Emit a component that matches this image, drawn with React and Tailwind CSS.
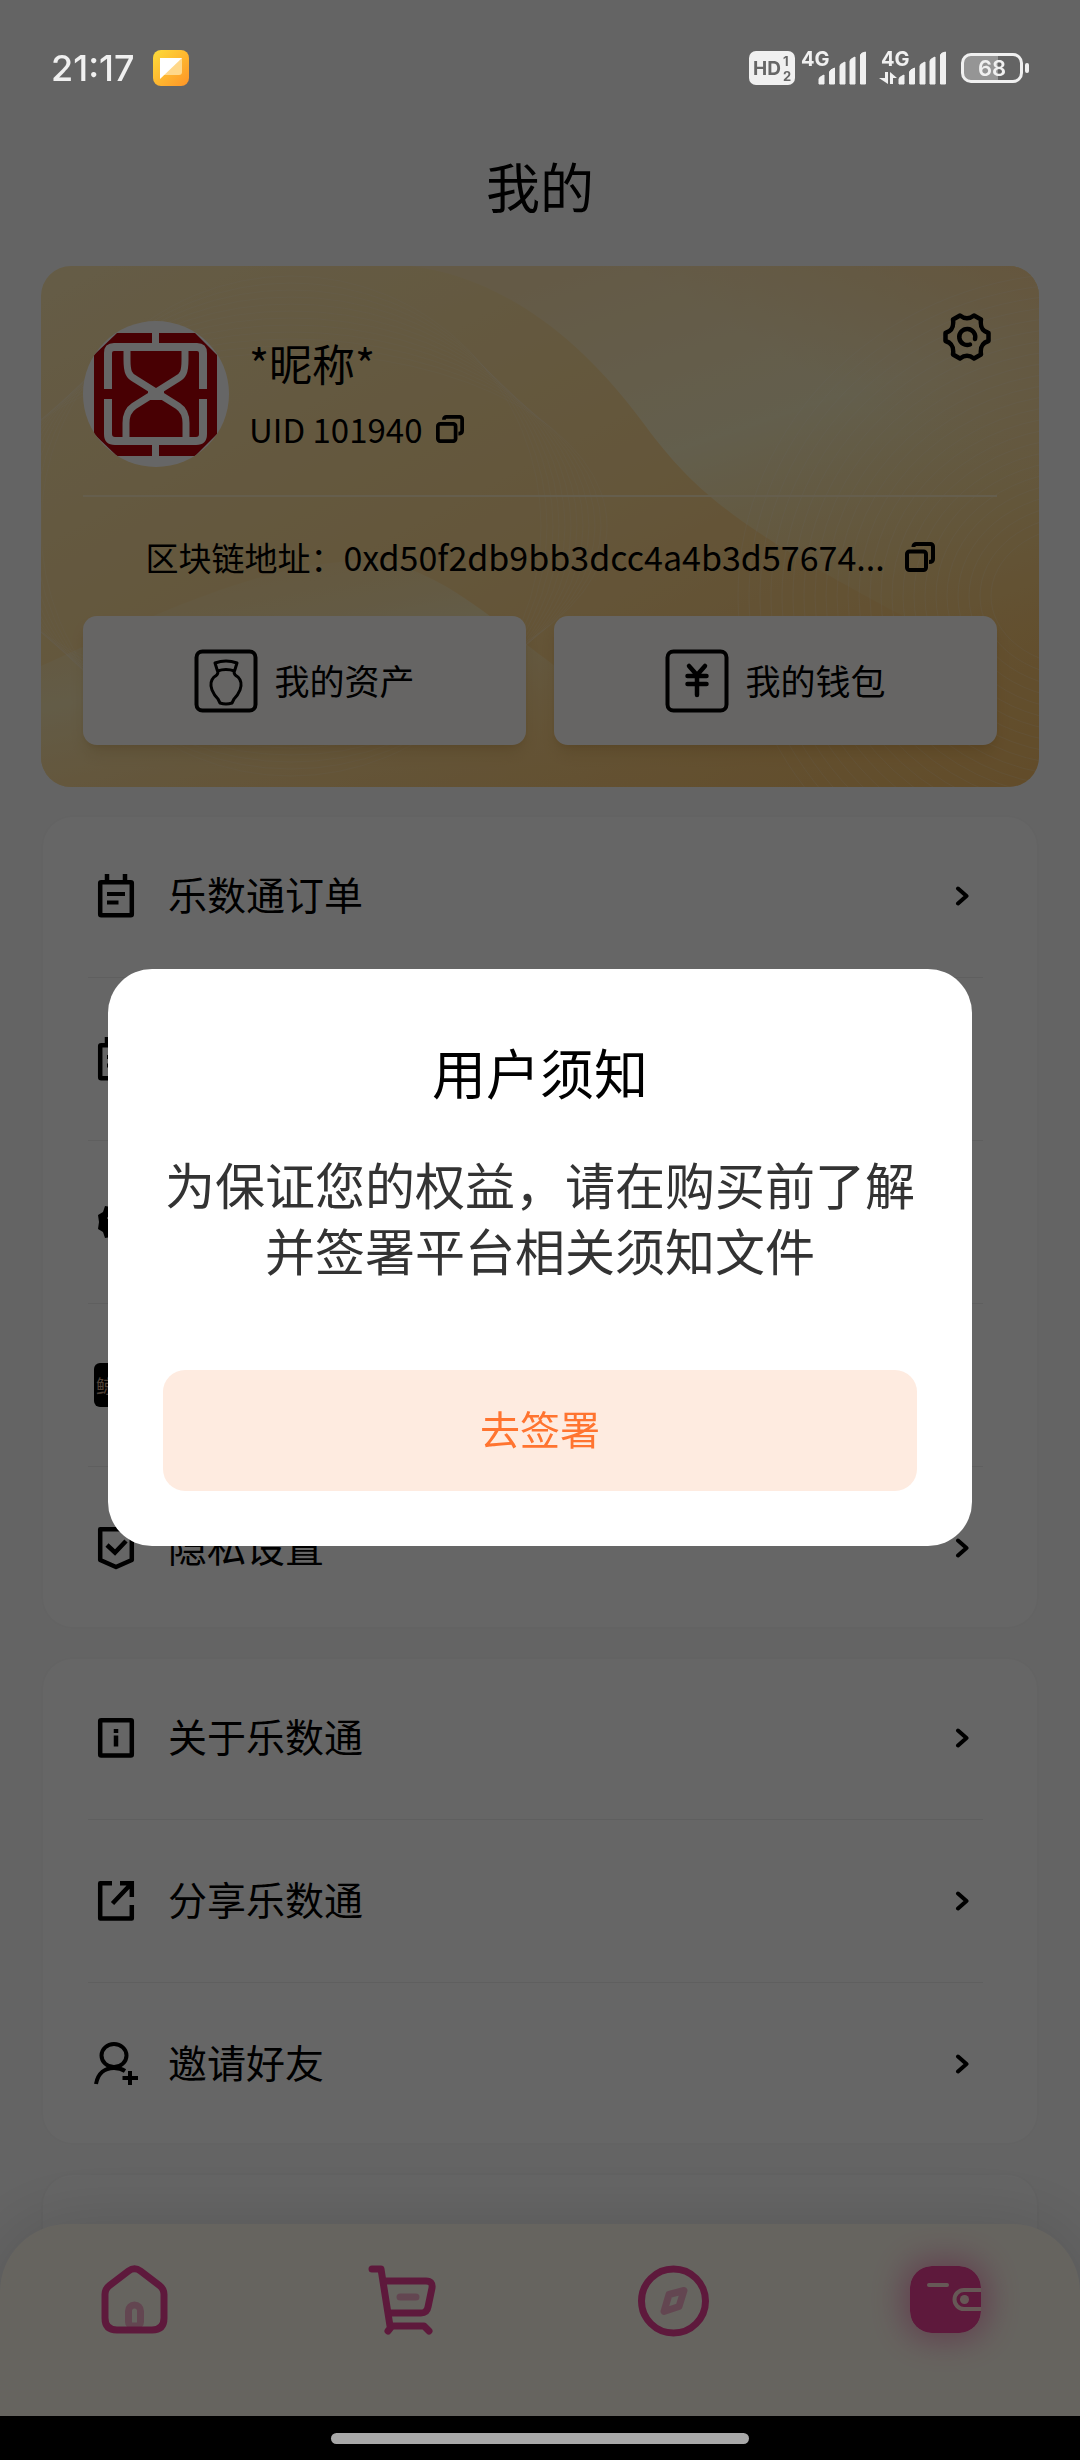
import React from 'react';

const Chevron = () => (
  <svg className="w-3.5 h-5" viewBox="0 0 14 20" fill="none" stroke="currentColor" strokeWidth="4" strokeLinejoin="round" strokeLinecap="round">
    <path d="m3 2.500 8.500 7.500L3 17.500" />
  </svg>
);

const CopyIcon = ({ className }) => (
  <svg className={className} viewBox="0 0 30 30" fill="none" stroke="currentColor" strokeWidth="4">
    <rect x="2" y="9.500" width="19" height="18.500" rx="2.500" />
    <path d="M8.500 5V4.500A2.500 2.500 0 0 1 11 2H25.500A2.500 2.500 0 0 1 28 4.500V17q0 3-4 3" />
  </svg>
);

const GearIcon = () => (
  <svg className="w-12 h-12" viewBox="0 0 48 48" fill="none" stroke="currentColor" strokeWidth="4.500" strokeLinejoin="round" strokeLinecap="round">
    <path d="M17 2.500Q24 8 31 2.500L38 6.500C37 14 39 18 45.500 20V28C39 30 37 34 38 41.500L31 45.500Q24 40 17 45.500L10 41.500C11 34 9 30 2.500 28V20C9 18 11 14 10 6.500Z" />
    <path d="M32 26a8 8 0 1 0-5 5.500" />
  </svg>
);

const OrderIcon = () => (
  <svg className="w-11 h-11" viewBox="0 0 44 44" fill="none" stroke="currentColor" strokeWidth="4.500">
    <rect x="6.200" y="8.200" width="31.600" height="33" rx="1" />
    <path d="M13 0v8M31 0v8" />
    <path d="M13 20h18M13 28.500h11.500" strokeWidth="4" />
  </svg>
);

const BadgeIcon = () => (
  <svg className="w-11 h-11" viewBox="0 0 44 44">
    <path fill="currentColor" d="m22 4 5 3 6-1 2 6 5 3-1 7 1 7-5 3-2 6-6-1-5 3-5-3-6 1-2-6-5-3 1-7-1-7 5-3 2-6 6 1z" />
    <path fill="none" stroke="#fff" strokeWidth="3" d="m14 17 8 9 8-9" />
  </svg>
);

const FishIcon = () => (
  <span className="flex h-11 w-11 items-center overflow-hidden rounded-md bg-black pl-0.5 text-lg text-[#c9a58a]">
    鲸
  </span>
);

const ShieldIcon = () => (
  <svg className="w-11 h-11" viewBox="0 0 44 44" fill="none" stroke="currentColor" strokeWidth="4.500">
    <path d="M6.200 3.200h31.600V34L22 41 6.200 34z" strokeLinejoin="round" />
    <path d="m13 19 8 7.500L32 15" />
  </svg>
);

const InfoIcon = () => (
  <svg className="w-11 h-11" viewBox="0 0 44 44" fill="none" stroke="currentColor" strokeWidth="4.500">
    <rect x="6.200" y="4.200" width="31.600" height="35.200" rx="1" />
    <path d="M22 13v4M22 19.500v11" />
  </svg>
);

const ShareIcon = () => (
  <svg className="w-11 h-11" viewBox="0 0 44 44" fill="none" stroke="currentColor" strokeWidth="4.500">
    <path d="M18 4.200H6.200v35.200h31.600V26" strokeLinejoin="round" />
    <path d="M26 4.200h11.800V18M37 5 18.500 24.500" />
  </svg>
);

const InviteIcon = () => (
  <svg className="w-11 h-11" viewBox="0 0 44 44" fill="none" stroke="currentColor" strokeWidth="4">
    <ellipse cx="20" cy="13.500" rx="12.500" ry="11.500" />
    <path d="M2 42c2-11 9-16 18-16 5 0 8 1 11 3" />
    <path d="M36 29v14M28.500 36h15.500" />
  </svg>
);

const mainRows = [
  { Icon: OrderIcon, label: '乐数通订单' },
  { Icon: OrderIcon },
  { Icon: BadgeIcon },
  { Icon: FishIcon },
  { Icon: ShieldIcon, label: '隐私设置' },
];

const moreRows = [
  { Icon: InfoIcon, label: '关于乐数通' },
  { Icon: ShareIcon, label: '分享乐数通' },
  { Icon: InviteIcon, label: '邀请好友' },
];

const MenuCard = ({ rows }) => (
  <ul className="rounded-[32px] bg-white pl-[47px] pr-14 ring-2 ring-inset ring-[#f7f7f7] divide-y divide-[#eeeeee]">
    {rows.map(({ Icon, label }, i) => (
      <li key={i}>
        <a href="#" className="flex h-[162px] items-center pl-1.5 pr-3.5">
          <Icon />
          <span className="ml-[30px] flex-1 pb-1.5 text-[39px] leading-[56px]">{label}</span>
          <Chevron />
        </a>
      </li>
    ))}
  </ul>
);

const CardBackground = () => (
  <svg className="absolute inset-0 h-full w-full" viewBox="0 0 998 521" preserveAspectRatio="none" fill="none">
    <defs>
      <linearGradient id="base" x1="0" y1="0" x2="1" y2="1">
        <stop offset="0" stopColor="#fce6b0" />
        <stop offset="0.5" stopColor="#fad792" />
        <stop offset="1" stopColor="#f5be68" />
      </linearGradient>
      <linearGradient id="light" x1="0.3" y1="0" x2="0.8" y2="1">
        <stop offset="0" stopColor="#fbe2b0" />
        <stop offset="0.4" stopColor="#f8edc0" />
        <stop offset="1" stopColor="#f8d88e" stopOpacity="0" />
      </linearGradient>
      <linearGradient id="low" x1="0" y1="0" x2="0.8" y2="1">
        <stop offset="0" stopColor="#f8e0a8" stopOpacity="0" />
        <stop offset="0.4" stopColor="#f8e6b2" />
        <stop offset="1" stopColor="#f9c778" stopOpacity="0" />
      </linearGradient>
      <linearGradient id="glow" x1="1" y1="0" x2="0.6" y2="0.5">
        <stop offset="0" stopColor="#fcd79a" />
        <stop offset="1" stopColor="#fcd79a" stopOpacity="0" />
      </linearGradient>
    </defs>
    <path fill="url(#base)" d="M0 0h998v521H0z" />
    <path fill="url(#light)" d="M370 0C450 10 530 60 600 154 660 235 700 270 998 420V0z" />
    <path fill="url(#low)" d="M0 521V400c130-60 240-110 340-105 100 20 160 120 260 150s200 50 240 76z" />
    <path fill="url(#glow)" d="M600 0h398v300H600z" />
    <g stroke="#fff" strokeOpacity="0.16">
      {Array.from({ length: 24 }, (_, i) => (
        <ellipse key={i} cx="1040" cy="330" rx={90 + i * 11} ry={70 + i * 11} />
      ))}
    </g>
    <g stroke="#fff" strokeOpacity="0.12">
      {Array.from({ length: 12 }, (_, i) => (
        <ellipse key={i} cx="250" cy="260" rx={250 + i * 6} ry={250 - i * 7} />
      ))}
    </g>
  </svg>
);

const Avatar = () => (
  <svg className="h-[146px] w-[146px] rounded-full bg-white" viewBox="0 0 146 146" fill="none">
    <path fill="#b40008" d="M34 12h78l22 22v79l-22 22H34l-23-22V34z" />
    <g stroke="#fff" strokeWidth="8" strokeLinejoin="round">
      <path d="M25 68V32q0-6 6-6h83q6 0 6 6v36M25 78v35q0 7 7 7h81q7 0 7-7V78" />
      <path d="M72.500 10v15M72.500 121v15" strokeWidth="7" />
      <path d="M44 27v12c0 12 2 16 8 19l43 27c6 4 8 9 8 17v18" strokeWidth="7" />
      <path d="M102 27v12c0 12-2 16-8 19L51 85c-6 4-8 9-8 17v18" strokeWidth="7" />
    </g>
    <path d="M65 67h16v12H65z" fill="#fff" />
  </svg>
);

const VaseIcon = () => (
  <svg className="h-16 w-16" viewBox="0 0 64 64" fill="none" stroke="currentColor" strokeWidth="4" strokeLinejoin="round">
    <rect x="2.500" y="2.500" width="59" height="59" rx="6" />
    <path strokeWidth="3" d="M21 14q11-4 22 0l-2.500 8q-8.500-3-17 0zM24 23q0 3-4 5-5 5-2 13 2 5 6 9l2 4q6 2 12 0l2-4q4-4 6-9 3-8-2-13-4-2-4-5" />
  </svg>
);

const YuanIcon = () => (
  <svg className="h-16 w-16" viewBox="0 0 64 64" fill="none" stroke="currentColor" strokeWidth="4" strokeLinecap="round">
    <rect x="2.500" y="2.500" width="59" height="59" rx="6" />
    <path d="m24 17 8 9 8-9M22.500 27h19M22.500 35h19M32 27v19" strokeWidth="4.500" />
  </svg>
);

const ProfileCard = () => (
  <section className="relative overflow-hidden rounded-[30px] px-[42px] pb-[42px] pt-[55px]">
    <CardBackground />
    <div className="relative">
      <div className="flex border-b-2 border-[#fdebc0] pb-7">
        <Avatar />
        <div className="ml-5 flex-1 pt-2">
          <p className="text-[43px] leading-[66px]">*昵称*</p>
          <div className="flex items-center gap-3.5 pt-2.5">
            <p className="text-[33px] leading-[48px]">UID 101940</p>
            <button aria-label="复制" className="block"><CopyIcon className="h-7 w-7" /></button>
          </div>
        </div>
        <button aria-label="设置" className="-mt-2 mr-1.5 h-12"><GearIcon /></button>
      </div>
      <div className="flex items-center justify-center pt-9 pb-[35px] text-[33px] leading-[48px]">
        <span>区块链地址：</span>
        <span className="text-[34px] whitespace-nowrap">0xd50f2db9bb3dcc4a4b3d57674...</span>
        <button aria-label="复制" className="ml-5"><CopyIcon className="h-[30px] w-[30px]" /></button>
      </div>
      <div className="grid grid-cols-2 gap-7">
        <button className="flex h-[129px] items-center justify-center gap-4 rounded-[14px] bg-[#fffdfa] text-[35px] shadow-lg shadow-[#a07020]/20">
          <VaseIcon />
          我的资产
        </button>
        <button className="flex h-[129px] items-center justify-center gap-4 rounded-[14px] bg-[#fffdfa] text-[35px] shadow-lg shadow-[#a07020]/20">
          <YuanIcon />
          我的钱包
        </button>
      </div>
    </div>
  </section>
);

const TabBar = () => (
  <nav className="fixed inset-x-0 bottom-0 h-[236px] rounded-t-[68px] bg-[#fffaee] pt-8 shadow-[0_0_80px_rgba(0,0,0,0.16)]">
    <div className="grid grid-cols-4 justify-items-center text-[#eb4096]">
      <a href="#" aria-label="首页">
        <svg className="h-[88px] w-[88px]" viewBox="0 0 88 88" fill="none" stroke="currentColor" strokeWidth="7">
          <path strokeOpacity="0.4" d="M37.500 66V55a6 6 0 0 1 12 0v11a4 4 0 0 1-4 4h-4a4 4 0 0 1-4-4z" />
          <path d="M37.500 15q6-4.500 12 0l19 14.500q4.500 3.500 4.500 9V62q0 12-12 12H26q-12 0-12-12V38.500q0-5.500 4.500-9z" />
        </svg>
      </a>
      <a href="#" aria-label="购物车">
        <svg className="h-[88px] w-[88px]" viewBox="0 0 88 88" fill="none" stroke="currentColor" strokeWidth="7" strokeLinecap="round" strokeLinejoin="round">
          <path d="M11 13h9l9 57M23 25h42q7 0 6 7l-4 19q-1 6-7 6H28M30 70h33l5 5M31 70l-4 5" />
          <path strokeOpacity="0.4" d="M39 41h16" />
        </svg>
      </a>
      <a href="#" aria-label="发现">
        <svg className="h-[88px] w-[88px]" viewBox="0 0 88 88" fill="none" stroke="currentColor" strokeWidth="7" strokeLinejoin="round">
          <circle cx="42.500" cy="45" r="32" />
          <path strokeOpacity="0.4" d="m38 38.500 15-4-5 16-15 5z" />
        </svg>
      </a>
      <a href="#" aria-label="我的" className="pt-2.5">
        <svg className="h-[67px] w-[71px] rounded-[22px] shadow-[0_0_32px_6px_rgba(235,64,150,0.5)]" viewBox="0 0 71 67" fill="none">
          <rect width="71" height="67" rx="21" fill="currentColor" />
          <path d="M19 19h18M71 24H54a9 9 0 0 0 0 19h17" stroke="#ffddd8" strokeWidth="4" strokeLinecap="round" />
          <circle cx="54.500" cy="33.500" r="4.500" fill="#ffddd8" />
        </svg>
      </a>
    </div>
  </nav>
);

const Signal = ({ data }) => (
  <svg className="h-[34px] w-[66px] overflow-visible" viewBox="0 0 66 34" fill="currentColor">
    <text x="0" y="15" fontSize="20" fontWeight="700">4G</text>
    <path d="M18 33v-5q0-2 5-4v9zM28.500 33V21q0-2 5-4v16zM39 33V15q0-2 5-4v22zM49 33V10q0-2 5-4v27zM59.500 33V4q0-2 5-3v32z" stroke="currentColor" strokeWidth="1" strokeLinejoin="round" />
    {data && <path d="M4 21h3v12L-2 27h6zM9 33h3v-6h4L9 21z" />}
  </svg>
);

const StatusBar = () => (
  <header className="flex h-[98px] items-center justify-between px-[51px] pt-[38px] font-[Inter,sans-serif] text-[#f0f0f0]">
    <div className="flex items-center gap-[18px]">
      <span className="text-[36px] leading-9 font-medium">21:17</span>
      <svg className="h-9 w-9" viewBox="0 0 36 36">
        <defs>
          <linearGradient id="note" x1="0" y1="0" x2="1" y2="1">
            <stop offset="0" stopColor="#fddc3a" />
            <stop offset="1" stopColor="#ff9426" />
          </linearGradient>
        </defs>
        <rect width="36" height="36" rx="8" fill="url(#note)" />
        <path d="M7 8h22v14q0 3-3 3H11z" fill="#ffd88a" />
        <path d="M7 8h22L7 29z" fill="#fff" />
      </svg>
    </div>
    <div className="flex items-center gap-3.5">
      <svg className="-mr-2 h-[34px] w-[46px]" viewBox="0 0 46 34">
        <rect width="46" height="34" rx="7" fill="currentColor" />
        <g fill="#666" fontWeight="700">
          <text x="4" y="24" fontSize="19">HD</text>
          <text x="34" y="15" fontSize="13">1</text>
          <text x="34" y="30" fontSize="13">2</text>
        </g>
      </svg>
      <Signal />
      <Signal data />
      <div className="flex items-center gap-0.5">
        <span className="flex h-[30px] w-[62px] items-center justify-center rounded-[10px] border-[3px] border-current bg-linear-to-r from-[#959595] from-60% to-transparent to-60% text-[22px] leading-6 font-semibold">
          68
        </span>
        <span className="h-2.5 w-1 rounded-full bg-current" />
      </div>
    </div>
  </header>
);

const NoticeDialog = () => (
  <div role="dialog" aria-modal="true" aria-labelledby="notice-title" className="w-4/5 rounded-[44px] bg-white px-[55px] pb-[55px] pt-[63px] text-center">
    <h2 id="notice-title" className="text-[54px] leading-[80px]">用户须知</h2>
    <p className="mt-[38px] text-[50px] leading-[66px] text-[#333]">
      为保证您的权益，请在购买前了解并签署平台相关须知文件
    </p>
    <button className="mt-[88px] h-[121px] w-full rounded-[22px] bg-[#feebe0] pb-1 text-[40px] text-[#ff7430]">
      去签署
    </button>
  </div>
);

const App = () => {
  return (
    <div className="h-screen overflow-hidden bg-[#fbfbfb] font-['Noto_Sans_CJK_SC',sans-serif] text-black">
      <main className="px-[41px] pt-[92px]">
        <h1 className="flex h-[174px] items-center justify-center pt-3 text-[54px]">我的</h1>
        <div className="flex flex-col gap-7">
          <ProfileCard />
          <MenuCard rows={mainRows} />
          <MenuCard rows={moreRows} />
          <MenuCard rows={[{ Icon: InfoIcon }]} />
        </div>
      </main>
      <TabBar />
      <div className="fixed inset-0 flex flex-col bg-black/60">
        <StatusBar />
        <div className="flex flex-1 items-center justify-center">
          <NoticeDialog />
        </div>
        <footer className="flex h-11 items-center justify-center bg-black">
          <span className="h-[11px] w-[418px] rounded-full bg-[#a8a8a8]" />
        </footer>
      </div>
    </div>
  );
};

export default App;
